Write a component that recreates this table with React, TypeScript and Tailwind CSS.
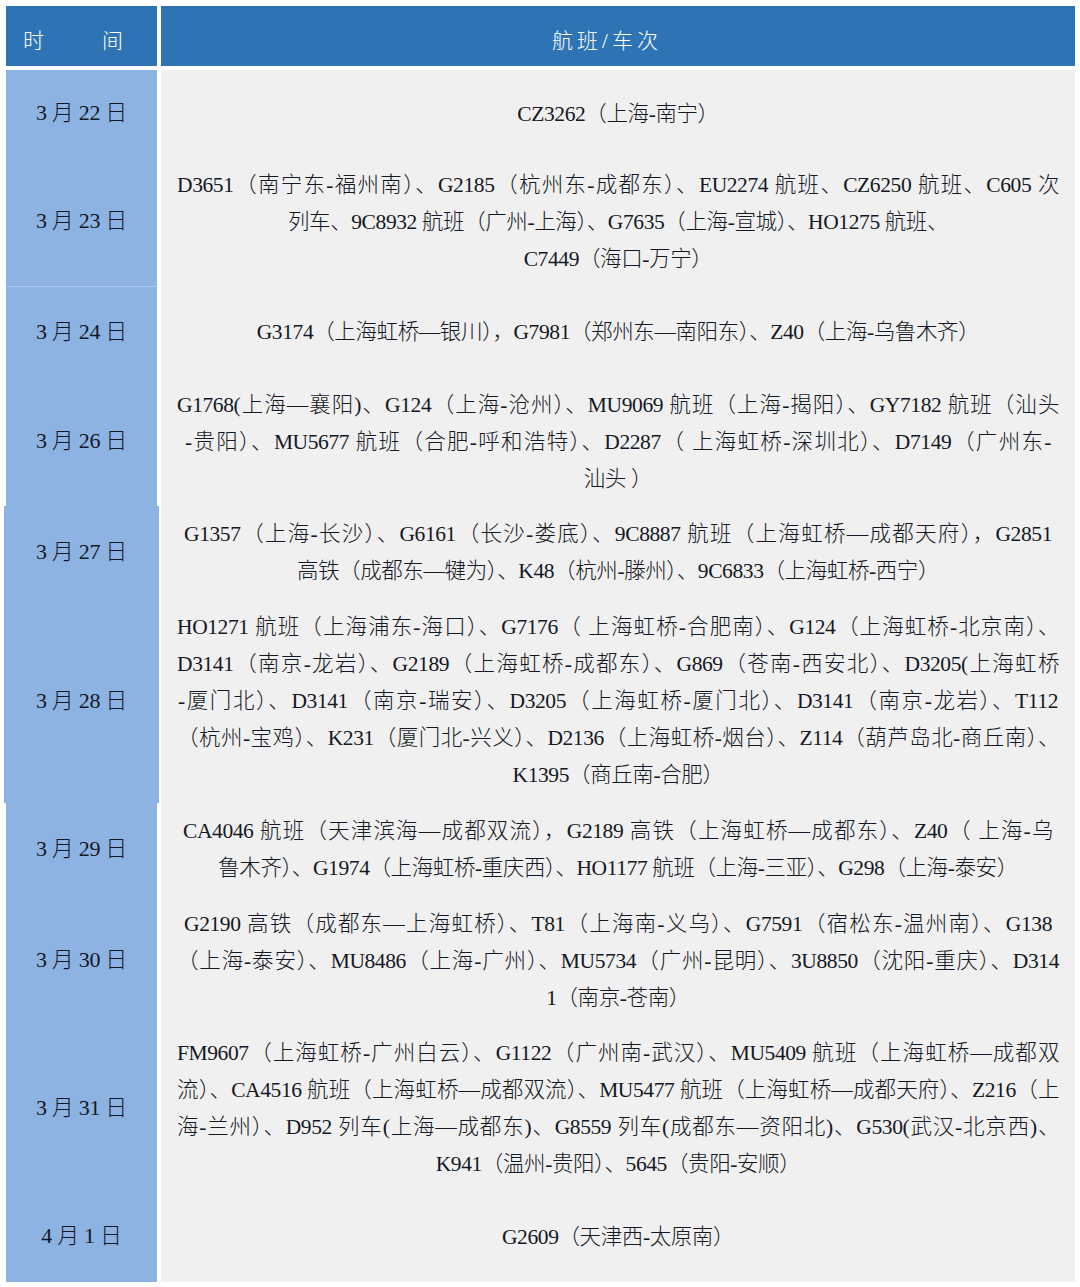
import React from "react";

type Line = { t: string; w?: number };
type Row = { date: string; h: number; lines: Line[]; wide?: boolean };

const rows: Row[] = [
  { date: "3 月 22 日", h: 88, lines: [{ t: "CZ3262（上海-南宁）" }] },
  {
    date: "3 月 23 日",
    h: 128,
    lines: [
      { t: "D3651（南宁东-福州南）、G2185（杭州东-成都东）、EU2274 航班、CZ6250 航班、C605 次", w: 882 },
      { t: "列车、9C8932 航班（广州-上海）、G7635（上海-宣城）、HO1275 航班、" },
      { t: "C7449（海口-万宁）" },
    ],
  },
  { date: "3 月 24 日", h: 92, lines: [{ t: "G3174（上海虹桥—银川），G7981（郑州东—南阳东）、Z40（上海-乌鲁木齐）" }] },
  {
    date: "3 月 26 日",
    h: 128,
    lines: [
      { t: "G1768(上海—襄阳)、G124（上海-沧州）、MU9069 航班（上海-揭阳）、GY7182 航班（汕头", w: 882 },
      { t: "-贵阳）、MU5677 航班（合肥-呼和浩特）、D2287（ 上海虹桥-深圳北）、D7149（广州东-", w: 866 },
      { t: "汕头 ）" },
    ],
  },
  {
    date: "3 月 27 日",
    h: 94,
    wide: true,
    lines: [
      { t: "G1357（上海-长沙）、G6161（长沙-娄底）、9C8887 航班（上海虹桥—成都天府），G2851", w: 868 },
      { t: "高铁（成都东—犍为）、K48（杭州-滕州）、9C6833（上海虹桥-西宁）" },
    ],
  },
  {
    date: "3 月 28 日",
    h: 203,
    wide: true,
    lines: [
      { t: "HO1271 航班（上海浦东-海口）、G7176（ 上海虹桥-合肥南）、G124（上海虹桥-北京南）、", w: 882 },
      { t: "D3141（南京-龙岩）、G2189（上海虹桥-成都东）、G869（苍南-西安北）、D3205(上海虹桥", w: 882 },
      { t: "-厦门北）、D3141（南京-瑞安）、D3205（上海虹桥-厦门北）、D3141（南京-龙岩）、T112", w: 880 },
      { t: "（杭州-宝鸡）、K231（厦门北-兴义）、D2136（上海虹桥-烟台）、Z114（葫芦岛北-商丘南）、", w: 882 },
      { t: "K1395（商丘南-合肥）" },
    ],
  },
  {
    date: "3 月 29 日",
    h: 94,
    lines: [
      { t: "CA4046 航班（天津滨海—成都双流），G2189 高铁（上海虹桥—成都东）、Z40（ 上海-乌", w: 870 },
      { t: "鲁木齐）、G1974（上海虹桥-重庆西）、HO1177 航班（上海-三亚）、G298（上海-泰安）" },
    ],
  },
  {
    date: "3 月 30 日",
    h: 128,
    lines: [
      { t: "G2190 高铁（成都东—上海虹桥）、T81（上海南-义乌）、G7591（宿松东-温州南）、G138", w: 868 },
      { t: "（上海-泰安）、MU8486（上海-广州）、MU5734（广州-昆明）、3U8850（沈阳-重庆）、D314", w: 882 },
      { t: "1（南京-苍南）" },
    ],
  },
  {
    date: "3 月 31 日",
    h: 167,
    lines: [
      { t: "FM9607（上海虹桥-广州白云）、G1122（广州南-武汉）、MU5409 航班（上海虹桥—成都双", w: 882 },
      { t: "流）、CA4516 航班（上海虹桥—成都双流）、MU5477 航班（上海虹桥—成都天府）、Z216（上", w: 882 },
      { t: "海-兰州）、D952 列车(上海—成都东)、G8559 列车(成都东—资阳北)、G530(武汉-北京西)、", w: 882 },
      { t: "K941（温州-贵阳）、5645（贵阳-安顺）" },
    ],
  },
  { date: "4 月 1 日", h: 90, lines: [{ t: "G2609（天津西-太原南）" }] },
];

function TextLine({ line }: { line: Line }) {
  if (line.w) {
    return (
      <div className="flex justify-center">
        <div
          className="whitespace-nowrap text-justify [text-align-last:justify] [text-justify:inter-character] tracking-[-0.4px]"
          style={{ width: line.w }}
        >
          {line.t}
        </div>
      </div>
    );
  }
  return <div className="whitespace-nowrap text-center tracking-[-0.4px]">{line.t}</div>;
}

export default function App() {
  return (
    <div
      className="w-[1080px] h-[1287px] bg-white pt-[6px] pl-[6px] text-[#141824]"
      style={{ fontFamily: '"Liberation Serif", "Noto Sans CJK SC", serif' }}
    >
      <div className="grid grid-cols-[151px_914px] gap-x-[4px] w-[1069px]">
        <div className="h-[60px] bg-[#2e74b5] flex items-center pt-[12px] pl-[17px] text-white text-[21px] font-light">
          <div className="flex justify-between w-[100px]">
            <span>时</span>
            <span>间</span>
          </div>
        </div>
        <div className="h-[60px] bg-[#2e74b5] flex items-center justify-center pt-[12px] pr-[22px] text-white text-[21px] font-light tracking-[4px]">
          航班/车次
        </div>
        <div className="col-span-2 h-[4px]" />
        {rows.map((r, i) => (
          <React.Fragment key={i}>
            <div
              className={
                "bg-[#8db3e2] flex items-center justify-center pb-[3px] text-[22px] font-light tracking-[-0.3px] " +
                (r.wide ? "-mx-[2px] " : "") +
                (i === 2 ? "border-t border-[#a9c6ea]" : "")
              }
              style={{ height: r.h }}
            >
              {r.date}
            </div>
            <div
              className="bg-[#f0f0f0] flex flex-col justify-center text-[21.5px] leading-[37px] font-light"
              style={{ height: r.h }}
            >
              {r.lines.map((l, j) => (
                <TextLine key={j} line={l} />
              ))}
            </div>
          </React.Fragment>
        ))}
      </div>
    </div>
  );
}
